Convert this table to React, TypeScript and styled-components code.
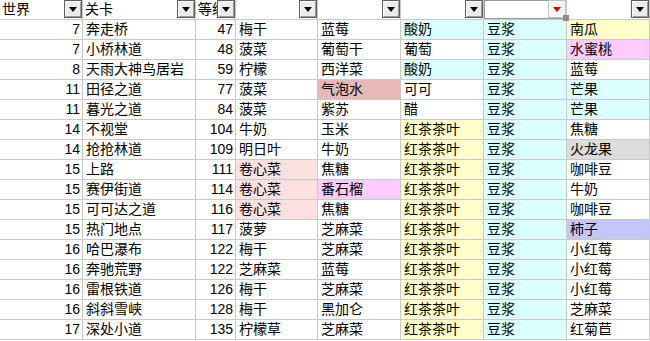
import styled, { createGlobalStyle } from 'styled-components';

const GlobalStyle = createGlobalStyle`
  html, body {
    margin: 0;
    padding: 0;
    background: #ffffff;
  }
`;

const Line = '#c9c9c9';
const Cyan = '#dcffff';
const Yellow = '#ffffcc';
const Pink = '#ffccff';
const Rose = '#e6b8b7';
const Blush = '#fde0e0';
const Silver = '#dcdcdc';
const Lavender = '#c6c6ff';

type Fill = string | [string, string];
type Row = [number, string, number, Fill, Fill, Fill, Fill, Fill];

const Tea: Fill = ['红茶茶叶', Yellow];
const Soy: Fill = ['豆浆', Cyan];

const rows: Row[] = [
  [7, '奔走桥', 47, '梅干', '蓝莓', ['酸奶', Cyan], Soy, ['南瓜', Yellow]],
  [7, '小桥林道', 48, '菠菜', '葡萄干', '葡萄', Soy, ['水蜜桃', Pink]],
  [8, '天雨大神鸟居岩', 59, '柠檬', '西洋菜', ['酸奶', Cyan], Soy, '蓝莓'],
  [11, '田径之道', 77, '菠菜', ['气泡水', Rose], '可可', Soy, ['芒果', Cyan]],
  [11, '暮光之道', 84, '菠菜', '紫苏', '醋', Soy, ['芒果', Cyan]],
  [14, '不视堂', 104, '牛奶', '玉米', Tea, Soy, '焦糖'],
  [14, '抢抢林道', 109, '明日叶', '牛奶', Tea, Soy, ['火龙果', Silver]],
  [15, '上路', 111, ['卷心菜', Blush], '焦糖', Tea, Soy, '咖啡豆'],
  [15, '赛伊街道', 114, ['卷心菜', Blush], ['番石榴', Pink], Tea, Soy, '牛奶'],
  [15, '可可达之道', 116, ['卷心菜', Blush], '焦糖', Tea, Soy, '咖啡豆'],
  [15, '热门地点', 117, '菠萝', '芝麻菜', Tea, Soy, ['柿子', Lavender]],
  [16, '哈巴瀑布', 122, '梅干', '芝麻菜', Tea, Soy, '小红莓'],
  [16, '奔驰荒野', 122, '芝麻菜', '蓝莓', Tea, Soy, '小红莓'],
  [16, '雷根铁道', 126, '梅干', '芝麻菜', Tea, Soy, '小红莓'],
  [16, '斜斜雪峡', 128, '梅干', '黑加仑', Tea, Soy, '芝麻菜'],
  [17, '深处小道', 135, '柠檬草', '芝麻菜', Tea, Soy, '红菊苣'],
];

const headers = ['世界', '关卡', '等级', '', '', '', '', ''];

const Sheet = styled.div`
  display: grid;
  grid-template-columns: 83px 113px 40px 82px 83px 83px 83px 83px;
  grid-auto-rows: 20px;
  width: 650px;
  font-family: "Liberation Sans", "Noto Sans CJK SC", sans-serif;
  font-size: 14px;
  color: #000;
`;

const Cell = styled.div<{ $bg?: string; $num?: boolean }>`
  box-sizing: border-box;
  border-right: 1px solid ${Line};
  border-bottom: 1px solid ${Line};
  background: ${(p) => p.$bg || '#ffffff'};
  padding: 0 ${(p) => (p.$num ? '2px' : '3px')};
  text-align: ${(p) => (p.$num ? 'right' : 'left')};
  line-height: 19px;
  white-space: nowrap;
  overflow: hidden;
`;

const HeadCell = styled(Cell)<{ $active?: boolean }>`
  position: relative;
  overflow: visible;
  padding-left: 2px;
  ${(p) => p.$active && `
    box-shadow: inset 0 0 0 1px #9a9a9a;
  `}
`;

// autofilter dropdown, drawn over the right end of each header cell
const FilterButton = styled.div<{ $active?: boolean }>`
  position: absolute;
  right: 0;
  top: 0;
  width: 18px;
  height: 18px;
  box-sizing: border-box;
  display: flex;
  align-items: center;
  justify-content: center;
  background: ${(p) => (p.$active ? '#f7f7f7' : '#ececec')};
  border: 1px solid ${(p) => (p.$active ? '#c4c4c4' : '#5e5e5e')};
  box-shadow: ${(p) => (p.$active
    ? 'none'
    : 'inset 1px 1px 0 #ffffff, inset -1px -1px 0 #9c9c9c')};
`;

const Arrow = styled.div<{ $color: string }>`
  width: 0;
  height: 0;
  margin-top: 1px;
  border-left: 4.5px solid transparent;
  border-right: 4.5px solid transparent;
  border-top: 5px solid ${(p) => p.$color};
`;

const FillHandle = styled.div`
  position: absolute;
  right: -3px;
  bottom: -2px;
  width: 6px;
  height: 6px;
  background: #8c8c8c;
  z-index: 2;
`;

const cellOf = (f: Fill) => (typeof f === 'string' ? { t: f, bg: undefined } : { t: f[0], bg: f[1] });

export default function App() {
  return (
    <>
      <GlobalStyle />
      <Sheet>
        {headers.map((h, i) => (
          <HeadCell key={`h${i}`} $active={i === 6}>
            {h}
            <FilterButton $active={i === 6}>
              <Arrow $color={i === 6 ? '#e00000' : '#000000'} />
            </FilterButton>
            {i === 6 && <FillHandle />}
          </HeadCell>
        ))}
        {rows.map((r, ri) => {
          const [world, stage, level, ...items] = r;
          return [
            <Cell key={`${ri}a`} $num>{world}</Cell>,
            <Cell key={`${ri}b`}>{stage}</Cell>,
            <Cell key={`${ri}c`} $num>{level}</Cell>,
            ...items.map((f, ci) => {
              const c = cellOf(f);
              return <Cell key={`${ri}-${ci}`} $bg={c.bg}>{c.t}</Cell>;
            }),
          ];
        })}
      </Sheet>
    </>
  );
}
